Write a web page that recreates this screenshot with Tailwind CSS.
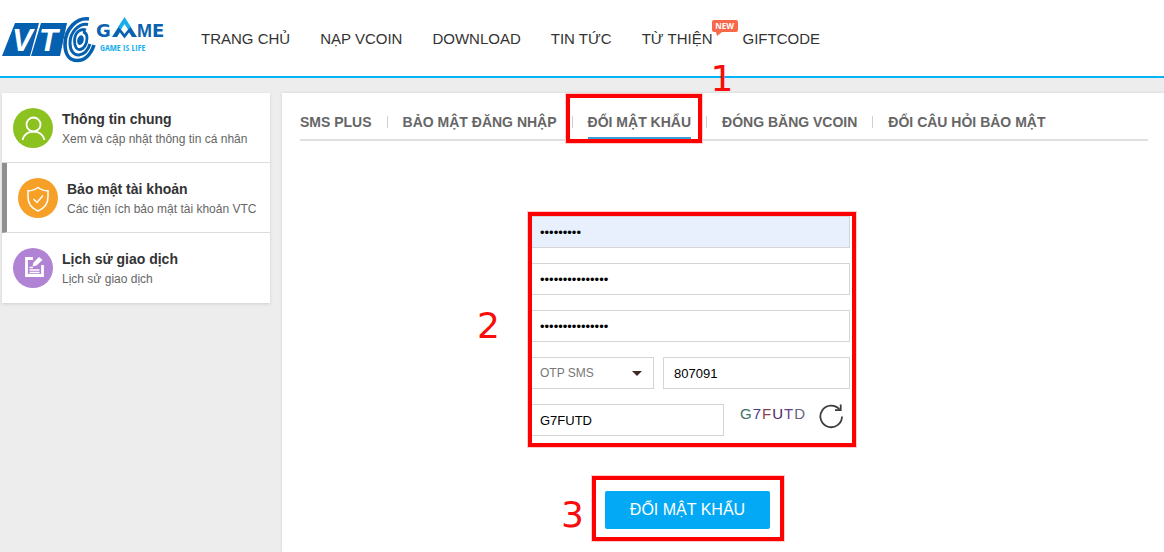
<!DOCTYPE html>
<html lang="vi">
<head>
    <meta charset="UTF-8">
    <meta name="viewport" content="width=device-width, initial-scale=1.0">
    <title>Đổi mật khẩu - VTC Game</title>
    <script src="https://cdn.jsdelivr.net/npm/@tailwindcss/browser@4"></script>
</head>
<body class="bg-[#ededed] min-h-screen flex flex-col font-['Liberation_Sans',Arial,sans-serif] text-[#333]">

    <!-- Header -->
    <header class="bg-white border-b-2 border-[#00b4f5] flex items-center h-[78px]">
        <a href="#" class="shrink-0 w-[201px]" aria-label="VTC Game">
            <svg width="170" height="56" viewBox="0 0 170 56" class="block">
                <path d="M15 13H39L30 46H2Z" fill="#0560b0"/>
                <path d="M41 13H67L60 46H31Z" fill="#0560b0"/>
                <text x="12" y="41" font-size="31" font-weight="bold" font-style="italic" fill="#fff">V</text>
                <text x="39" y="41" font-size="31" font-weight="bold" font-style="italic" fill="#fff">T</text>
                <ellipse cx="79" cy="30" rx="15" ry="23" fill="#fff" transform="rotate(18 79 30)"/>
                <g fill="none" stroke="#0560b0">
                    <path d="M89 9C77 7 65 19 65 34C65 45 70 50.500 77 50.500C85 50.500 91 44 94 35" stroke-width="3.600"/>
                    <path d="M88 14.500C79 13 70 22 70 33C70 41 74 45.500 79 45C84 44.500 88 40 90 34" stroke-width="3"/>
                    <path d="M86 20C80 18 74.500 23 74.500 31C74.500 37 77 40 80 39.500C84 39 87 34 87 28C87 24 86 22.500 83 22" stroke-width="2.800"/>
                </g>
                <ellipse cx="80.500" cy="30" rx="3.200" ry="5" fill="#0560b0" transform="rotate(14 80 30)"/>
                <g font-weight="bold" font-size="18" fill="#0b62b0">
                    <text x="96" y="27" font-family="DejaVu Sans, sans-serif">G</text>
                    <text x="137" y="27">M</text>
                    <text x="152" y="27" font-family="DejaVu Sans, sans-serif">E</text>
                </g>
                <path d="M112 27L119 16L122 19L117 27Z" fill="#0b62b0"/>
                <path d="M137 27L130 16L127 19L132 27Z" fill="#0b62b0"/>
                <path d="M118 20L124.500 28.500L131 20L128 15L121 15Z" fill="#0b62b0"/>
                <path d="M124.500 7L131 17L127.500 20L124.500 15L121.500 20L118 17Z" fill="#19aeea"/>
                <path d="M124.500 14L128 19.500L124.500 24L121 19.500Z" fill="#fff"/>
                <text x="100" y="41" font-family="Liberation Sans Narrow, Open Sans Condensed, sans-serif" font-weight="bold" font-size="9" fill="#19b0ee">GAME IS LIFE</text>
            </svg>
        </a>
        <nav class="flex gap-[30px] pt-0.5 text-[15px] whitespace-nowrap">
            <a href="#">TRANG CHỦ</a>
            <a href="#">NẠP VCOIN</a>
            <a href="#">DOWNLOAD</a>
            <a href="#">TIN TỨC</a>
            <a href="#" class="relative">TỪ THIỆN
                <span class="absolute left-[70px] -top-2 w-[26px] h-3 rounded-xs bg-[#f7694a] text-white text-[8px] leading-3 font-bold text-center font-['Open_Sans',sans-serif]">NEW
                    <svg width="6" height="5" viewBox="0 0 6 5" class="absolute left-1 top-full"><path d="M0 0H6L1 4Z" fill="#f7694a"/></svg>
                </span>
            </a>
            <a href="#">GIFTCODE</a>
        </nav>
    </header>

    <div class="flex flex-1 items-start gap-3 pt-[15px] pl-0.5">

        <!-- Sidebar -->
        <aside class="w-[268px] shrink-0 bg-white shadow-[0_1px_3px_rgba(0,0,0,0.12)] divide-y divide-[#dcdcdc]">
            <a href="#" class="flex items-center gap-[9px] h-[70px] pl-[11px]">
                <svg width="40" height="40" viewBox="0 0 40 40">
                    <circle cx="20" cy="20" r="20" fill="#8cc220"/>
                    <g fill="none" stroke="#fff" stroke-width="1.800">
                        <circle cx="20.500" cy="16.500" r="7"/>
                        <path d="M9.500 32C11 26.500 15 23.700 20.500 23.700S30 26.500 31.500 32"/>
                    </g>
                </svg>
                <span class="pt-0.5">
                    <b class="block text-[14px] leading-5">Thông tin chung</b>
                    <span class="block text-[12px] leading-5 text-[#666]">Xem và cập nhật thông tin cá nhân</span>
                </span>
            </a>
            <a href="#" class="flex items-center gap-[9px] h-[70px] pl-[11px] border-l-5 border-l-[#8f8f8f]">
                <svg width="40" height="40" viewBox="0 0 40 40">
                    <circle cx="20" cy="20" r="20" fill="#f6a028"/>
                    <g fill="none" stroke="#fff" stroke-width="1.500">
                        <path d="M20 9.500C17 12 13.500 12.800 10 12.800V19C10 26 14 30.500 20 33C26 30.500 30 26 30 19V12.800C26.500 12.800 23 12 20 9.500Z"/>
                        <path d="M15.500 21L19 24.500L25 17.500"/>
                    </g>
                </svg>
                <span class="pt-0.5">
                    <b class="block text-[14px] leading-5">Bảo mật tài khoản</b>
                    <span class="block text-[12px] leading-5 text-[#666]">Các tiện ích bảo mật tài khoản VTC</span>
                </span>
            </a>
            <a href="#" class="flex items-center gap-[9px] h-[70px] pl-[11px]">
                <svg width="40" height="40" viewBox="0 0 40 40">
                    <circle cx="20" cy="20" r="20" fill="#b083d4"/>
                    <g fill="none" stroke="#fff">
                        <path d="M20 10.500H13.500V27.500H29.500V17" stroke-width="2.800"/>
                        <path d="M16.500 19.500H20M16.500 22H26.500M16.500 24.500H26.500" stroke-width="1.400"/>
                    </g>
                    <path d="M19.500 18.500L20.500 14.500L26 9L29.500 12L23.500 17.500Z" fill="#fff"/>
                </svg>
                <span class="pt-0.5">
                    <b class="block text-[14px] leading-5">Lịch sử giao dịch</b>
                    <span class="block text-[12px] leading-5 text-[#666]">Lịch sử giao dịch</span>
                </span>
            </a>
        </aside>

        <!-- Content -->
        <main class="flex-1 self-stretch bg-white pl-[18px] pr-4 shadow-[0_0_3px_rgba(0,0,0,0.12)]">
            <ul class="flex items-center h-12 border-b-2 border-[#e0e0e0] pt-3 gap-[15px] text-[14px] font-bold text-[#666] whitespace-nowrap">
                <li><a href="#">SMS PLUS</a></li>
                <li class="w-px h-3 bg-[#d0d0d0]"></li>
                <li><a href="#">BẢO MẬT ĐĂNG NHẬP</a></li>
                <li class="w-px h-3 bg-[#d0d0d0]"></li>
                <li class="relative self-stretch flex items-center border-b-2 border-[#3a9bd8]">
                    <a href="#" class="pt-0.5">ĐỔI MẬT KHẨU</a>
                    <span class="absolute -left-[22px] -right-[11px] -top-[11px] -bottom-1.5 border-4 border-[#f00] ring-1 ring-[#fcc] pointer-events-none"></span>
                    <span class="absolute left-[123px] -top-11 font-['DejaVu_Sans',sans-serif] font-normal text-[36px] leading-none text-[#f80c0c]">1</span>
                </li>
                <li class="w-px h-3 bg-[#d0d0d0]"></li>
                <li><a href="#">ĐÓNG BĂNG VCOIN</a></li>
                <li class="w-px h-3 bg-[#d0d0d0]"></li>
                <li><a href="#">ĐỔI CÂU HỎI BẢO MẬT</a></li>
            </ul>

            <form id="passForm" class="w-80 ml-[230px] mt-[75px]">
                <div class="relative flex flex-col gap-[15px] text-[13px] text-black">
                    <input type="password" aria-label="Mật khẩu cũ" value="123456789" class="h-8 w-full px-[9px] border border-[#d5d5d5] bg-[#e8f0fe]">
                    <input type="password" aria-label="Mật khẩu mới" value="123456789012345" class="h-8 w-full px-[9px] border border-[#d5d5d5]">
                    <input type="password" aria-label="Nhập lại mật khẩu mới" value="123456789012345" class="h-8 w-full px-[9px] border border-[#d5d5d5]">
                    <div class="flex gap-[9px]">
                        <div class="relative w-[124px]">
                            <select aria-label="Loại OTP" class="appearance-none h-8 w-full px-[9px] border border-[#d5d5d5] text-[12px] text-[#777]">
                                <option>OTP SMS</option>
                            </select>
                            <svg width="10" height="5" viewBox="0 0 10 5" class="absolute right-3 top-3.5 pointer-events-none"><path d="M0 0H10L5 5Z" fill="#3d2b24"/></svg>
                        </div>
                        <input type="text" aria-label="Mã OTP" value="807091" class="h-8 flex-1 min-w-0 px-2.5 border border-[#d5d5d5]">
                    </div>
                    <div class="flex items-center h-8">
                        <input type="text" aria-label="Mã xác nhận" value="G7FUTD" class="h-8 w-[194px] px-[9px] border border-[#d5d5d5]">
                        <div class="flex gap-px ml-4 mb-3 text-[15px] leading-5">
                            <span class="text-[#3f6f66]">G</span>
                            <span class="text-[#4b3a8c]">7</span>
                            <span class="text-[#8c3f4b]">F</span>
                            <span class="text-[#4a2468]">U</span>
                            <span class="text-[#6b3f8f]">T</span>
                            <span class="text-[#66667f]">D</span>
                        </div>
                        <button type="button" aria-label="Đổi mã" class="ml-auto mr-1.5 mb-2">
                            <svg width="26" height="26" viewBox="0 0 26 26" fill="none" stroke="#3c3c3c" stroke-width="1.800" class="block">
                                <path d="M21.500 6.500A10.800 10.800 0 1 0 24 13.500"/>
                                <path d="M22.700 1.500V7.200H17"/>
                            </svg>
                        </button>
                    </div>
                    <span class="absolute -left-0.5 -right-1.5 -top-1 -bottom-[11px] border-4 border-[#f00] ring-1 ring-[#fcc] pointer-events-none"></span>
                    <span class="absolute -left-[53px] top-[92px] font-['DejaVu_Sans',sans-serif] text-[36px] leading-none text-[#f80c0c]">2</span>
                </div>

                <div class="relative w-[165px] mt-[55px] ml-[75px]">
                    <button type="submit" class="w-full h-[38px] rounded-xs bg-[#03a9f4] text-white text-[16px]">ĐỔI MẬT KHẨU</button>
                    <span class="absolute -left-[13px] -right-3.5 -top-[15px] -bottom-3 border-4 border-[#f00] ring-1 ring-[#fcc] pointer-events-none"></span>
                    <span class="absolute -left-11 top-1.5 font-['DejaVu_Sans',sans-serif] text-[36px] leading-none text-[#f80c0c]">3</span>
                </div>
            </form>
        </main>
    </div>

</body>
</html>
